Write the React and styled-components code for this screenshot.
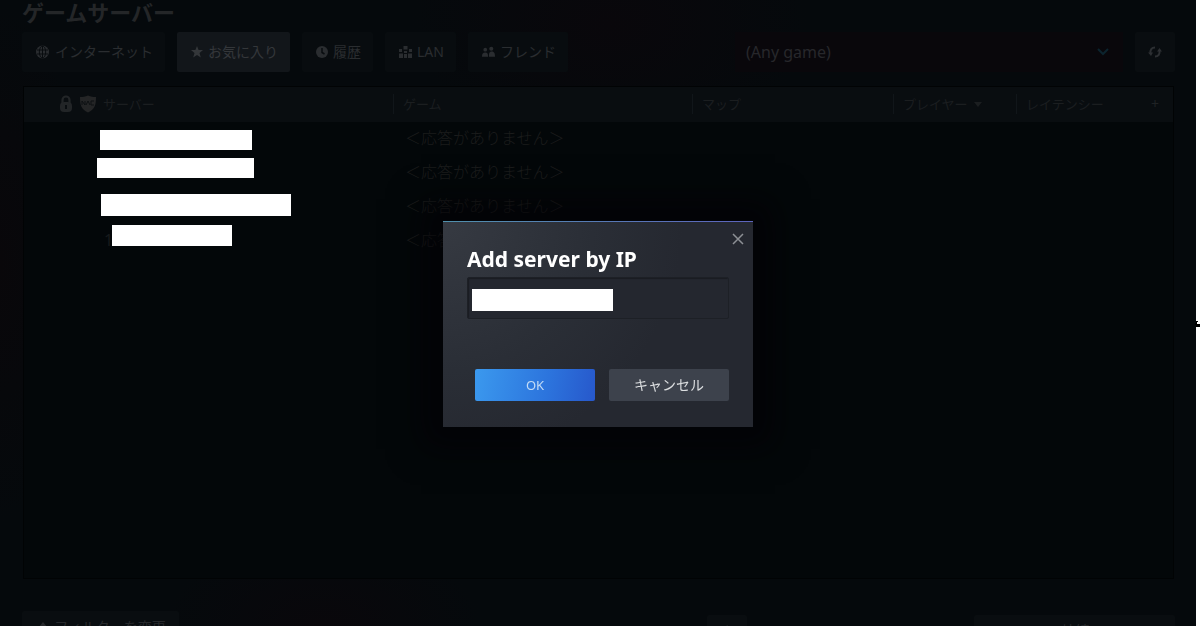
import React from "react";
import styled, { createGlobalStyle } from "styled-components";

const Global = createGlobalStyle`
  * { box-sizing: border-box; }
  html, body { margin: 0; background: #fff; }
  body, button, input, select {
    font-family: "Noto Sans", "Noto Sans CJK JP", sans-serif;
  }
`;

const Page = styled.div`
  position: relative;
  height: 100vh;
  margin-right: 4px;
  padding: 0 21px 0 22px;
  overflow: hidden;
  display: flex;
  flex-direction: column;
  background:
    radial-gradient(ellipse 200px 130px at 51% 4%, #09070b, transparent),
    radial-gradient(ellipse 90px 260px at 0% 42%, #09070a, transparent),
    radial-gradient(ellipse 160px 90px at 27% 100%, #09070b, transparent),
    #05090c;
`;

const Title = styled.h1`
  margin: 0 0 8px;
  font-size: 22px;
  line-height: 24px;
  font-weight: 700;
  color: #242628;
`;

const Toolbar = styled.div`
  display: flex;
  justify-content: space-between;
  height: 40px;
  margin-bottom: 14px;
`;

const Group = styled.div`
  display: flex;
  gap: ${(p) => p.$gap || 12}px;
`;

const Tab = styled.button`
  display: flex;
  align-items: center;
  gap: 5px;
  height: 40px;
  padding: 0 12px 0 14px;
  border: 0;
  border-radius: 2px;
  font-size: 14px;
  line-height: 20px;
  white-space: nowrap;
  color: ${(p) => (p.$active ? "#34373a" : "#2a2d30")};
  background: ${(p) => (p.$active ? "#12161a" : "#080c0f")};
`;

const SelectWrap = styled.div`
  display: grid;
  align-items: center;
  width: 388px;
  background: #09070b;
  > * { grid-area: 1 / 1; }
  > svg { justify-self: end; margin-right: 14px; pointer-events: none; }
`;

const GameSelect = styled.select`
  appearance: none;
  width: 100%;
  height: 40px;
  padding: 0 11px;
  border: 0;
  background: transparent;
  color: #27272b;
  font-size: 16px;
`;

const IconButton = styled.button`
  display: grid;
  place-items: center;
  width: 40px;
  height: 40px;
  padding: 0;
  border: 0;
  border-radius: 2px;
  color: #2c2f32;
  background: #090d10;
`;

const TablePanel = styled.div`
  flex: none;
  height: 493px;
  margin: 0 1px;
  border: 1px solid #010304;
  background: #030709;
`;

const Servers = styled.table`
  width: 100%;
  table-layout: fixed;
  border-collapse: collapse;
  th, td { padding: 0; text-align: left; font-weight: 400; }
  thead { background: #090d10; }
`;

const HeadCell = styled.div`
  display: flex;
  align-items: center;
  gap: 6px;
  height: 20px;
  margin: 7px 0 8px;
  padding: 0 ${(p) => (p.$last ? 14 : 0)}px 0 ${(p) => (p.$first ? 35 : 9)}px;
  border-left: ${(p) => (p.$first ? 0 : 1)}px solid #11161a;
  font-size: 13px;
  line-height: 20px;
  white-space: nowrap;
  color: #1b1e20;
  svg { flex: none; }
`;

const AddColumn = styled.button`
  margin-left: auto;
  padding: 0;
  border: 0;
  background: none;
  font-size: 14px;
  line-height: 20px;
  color: #1f2224;
`;

const NameCell = styled.div`
  position: relative;
  height: 34px;
  padding-left: 80px;
  font-size: 16px;
  line-height: 32px;
  color: #171a1c;
`;

const GameCell = styled.div`
  height: 34px;
  padding-left: 12px;
  font-size: 16px;
  font-weight: 300;
  line-height: 32px;
  white-space: nowrap;
  color: #1b1c1c;
`;

const Mask = styled.span`
  position: absolute;
  left: ${(p) => p.$x}px;
  top: ${(p) => p.$y}px;
  width: ${(p) => p.$w}px;
  height: ${(p) => p.$h}px;
  background: #fff;
`;

const Footer = styled.div`
  display: flex;
  justify-content: space-between;
  margin-top: 32px;
`;

const FooterButton = styled(Tab)`
  height: 32px;
  margin-top: ${(p) => p.$drop || 0}px;
  width: ${(p) => p.$w}px;
  justify-content: center;
  color: #26282b;
  background: #090d10;
`;

const Overlay = styled.div`
  position: fixed;
  inset: 0 4px 0 0;
  display: grid;
  place-items: center;
  padding-top: 22px;
`;

const Dialog = styled.form`
  display: flex;
  flex-direction: column;
  width: 310px;
  height: 206px;
  padding: 24px;
  background:
    linear-gradient(90deg, #5090ac, #5d64bd) top / 100% 1px no-repeat,
    radial-gradient(circle at 0 0, #363a42 0, #2a2e36 150px, #252830 240px);
  box-shadow: 0 0 30px 22px rgba(4, 2, 5, 0.6);
`;

const DialogTitle = styled.label`
  font-size: 21px;
  line-height: 28px;
  font-weight: 700;
  color: #fff;
`;

const Field = styled.div`
  position: relative;
  margin-top: 4px;
`;

const AddressInput = styled.input`
  display: block;
  width: 100%;
  height: 42px;
  padding: 0 8px;
  border: 1px solid #1d2026;
  border-radius: 2px;
  box-shadow: inset 1px 1px 1px #1a1c22;
  background: #24272f;
  color: #fff;
  font-size: 16px;
  outline: 0;
`;

const Actions = styled.div`
  display: flex;
  justify-content: flex-end;
  gap: 14px;
  margin-top: 50px;
`;

const Action = styled.button`
  width: 120px;
  height: 32px;
  padding: 0;
  border: 0;
  border-radius: 2px;
  font-size: ${(p) => (p.$primary ? 13 : 14)}px;
  line-height: 20px;
  color: ${(p) => (p.$primary ? "#c3dcf6" : "#dcdee0")};
  background: ${(p) => (p.$primary ? "linear-gradient(100deg, #3b99ee, #2c74dd 60%, #2758cb)" : "#3d424c")};
`;

const Close = styled.button`
  position: absolute;
  right: 9px;
  top: 12px;
  display: grid;
  padding: 0;
  border: 0;
  background: none;
  color: #8d9095;
`;

const DialogFrame = styled.div`
  position: relative;
`;

const Cursor = styled.svg`
  position: fixed;
  right: 0;
  top: 320px;
`;

const Globe = () => (
  <svg width="14" height="14" viewBox="0 0 14 14">
    <circle cx="6.5" cy="7" r="6.500" fill="currentColor" />
    <g fill="none" stroke="#080c0f">
      <path d="M6.5 1v12M1 5h11M1 9h11" />
      <ellipse cx="6.5" cy="7" rx="3.2" ry="6" />
    </g>
  </svg>
);
const Star = () => (
  <svg width="12" height="12" viewBox="0 0 12 12">
    <path fill="currentColor" d="M6 0l1.6 4H12L8.5 6.900l1.300 4.600L6 9l-3.800 2.500 1.300-4.600L0 4h4.400z" />
  </svg>
);
const Clock = () => (
  <svg width="12" height="12" viewBox="0 0 12 12">
    <circle cx="6" cy="6" r="6" fill="currentColor" />
    <path d="M6 2v4.500L8.500 8" fill="none" stroke="#080c0f" strokeWidth="1.500" />
  </svg>
);
const Lan = () => (
  <svg width="13" height="12" viewBox="0 0 13 12" fill="currentColor">
    <path d="M4.500 0h4v3.500h-4zM0 7.500h4V12H0zM9 7.500h4V12H9zM5 5h3v2H5zM5 8h3v4H5zM0 3h3v3H0zM10 3h3v3h-3z" />
  </svg>
);
const Friends = () => (
  <svg width="13" height="12" viewBox="0 0 14 12" fill="currentColor">
    <circle cx="3.500" cy="3.500" r="2" />
    <circle cx="10" cy="2.500" r="2.200" />
    <path d="M0 11c0-3 1-4.500 3.500-4.500S6.500 8 6.500 11zM7.500 11c0-3 0-5.500 3-5.500s3.500 2.500 3.500 5.500z" />
  </svg>
);
const Refresh = () => (
  <svg width="14" height="12" viewBox="0 0 14 12">
    <path d="M7 1.500C3.500 1.500 2 4 2.500 7.500M7 10.500c3.500 0 5-2.500 4.500-6" fill="none" stroke="currentColor" strokeWidth="2" />
    <path d="M0 6.500h5L3 10zM9 5.500h5L11.500 2z" fill="currentColor" />
  </svg>
);
const Lock = () => (
  <svg width="14" height="18" viewBox="0 0 14 18">
    <path d="M3.500 8V5a3.500 3.500 0 0 1 7 0v3" fill="none" stroke="#222527" strokeWidth="2.200" />
    <rect x="1" y="7" width="12" height="10" rx="4" fill="#222527" />
    <path d="M7 10v4" stroke="#090d10" strokeWidth="2" />
  </svg>
);
const Shield = () => (
  <svg width="18" height="18" viewBox="0 0 18 18">
    <path d="M1 2c3 0 5 0 8-1.500C12 2 14 2 17 2c0 8-1 12-8 15.500C2 14 1 10 1 2z" fill="#242526" />
    <path d="M3 10V6l3 4V6M7 10l2-4 2 4M15 6h-3v4h3" fill="none" stroke="#0d1012" />
  </svg>
);
const UpArrow = () => (
  <svg width="12" height="12" viewBox="0 0 12 12">
    <path d="M6 1l5 6H8v4H4V7H1z" fill="currentColor" />
  </svg>
);

const tabs = [
  { label: "インターネット", Icon: Globe },
  { label: "お気に入り", Icon: Star, active: true },
  { label: "履歴", Icon: Clock },
  { label: "LAN", Icon: Lan },
  { label: "フレンド", Icon: Friends },
];

const rows = [
  { x: 76, y: 8, w: 152, h: 20 },
  { x: 73, y: 2, w: 157, h: 20 },
  { x: 77, y: 4, w: 190, h: 22 },
  { x: 88, y: 1, w: 120, h: 21, text: "1" },
];

export default function App() {
  return (
    <>
      <Global />
      <Page>
        <Title>ゲームサーバー</Title>
        <Toolbar>
          <Group>
            {tabs.map(({ label, Icon, active }) => (
              <Tab key={label} $active={active}>
                <Icon />
                {label}
              </Tab>
            ))}
          </Group>
          <Group>
            <SelectWrap>
              <GameSelect aria-label="ゲーム">
                <option>(Any game)</option>
              </GameSelect>
              <svg width="12" height="8" viewBox="0 0 12 8">
                <path d="M1 1l5 5 5-5" fill="none" stroke="#0c242e" strokeWidth="2" />
              </svg>
            </SelectWrap>
            <IconButton aria-label="更新">
              <Refresh />
            </IconButton>
          </Group>
        </Toolbar>

        <TablePanel>
          <Servers>
            <colgroup>
              <col style={{ width: 369 }} />
              <col style={{ width: 299 }} />
              <col style={{ width: 201 }} />
              <col style={{ width: 123 }} />
              <col />
            </colgroup>
            <thead>
              <tr>
                <th><HeadCell $first><Lock /><Shield />サーバー</HeadCell></th>
                <th><HeadCell>ゲーム</HeadCell></th>
                <th><HeadCell>マップ</HeadCell></th>
                <th>
                  <HeadCell>
                    プレイヤー
                    <svg width="8" height="5" viewBox="0 0 8 5"><path d="M0 0h8L4 5z" fill="currentColor" /></svg>
                  </HeadCell>
                </th>
                <th>
                  <HeadCell $last>
                    レイテンシー
                    <AddColumn>+</AddColumn>
                  </HeadCell>
                </th>
              </tr>
            </thead>
            <tbody>
              {rows.map((r) => (
                <tr key={r.y}>
                  <td>
                    <NameCell>
                      {r.text}
                      <Mask $x={r.x} $y={r.y} $w={r.w} $h={r.h} />
                    </NameCell>
                  </td>
                  <td><GameCell>＜応答がありません＞</GameCell></td>
                  <td /><td /><td />
                </tr>
              ))}
            </tbody>
          </Servers>
        </TablePanel>

        <Footer>
          <FooterButton $w={157}><UpArrow />フィルターを変更</FooterButton>
          <Group $gap={227}>
            <FooterButton $w={40} $drop={4} aria-label="更新"><Refresh /></FooterButton>
            <FooterButton $w={201} $drop={4}>接続</FooterButton>
          </Group>
        </Footer>
      </Page>

      <Overlay>
        <DialogFrame>
          <Dialog onSubmit={(e) => e.preventDefault()}>
            <DialogTitle htmlFor="address">Add server by IP</DialogTitle>
            <Field>
              <AddressInput id="address" type="text" />
              <Mask $x={5} $y={12} $w={141} $h={22} />
            </Field>
            <Actions>
              <Action $primary type="submit">OK</Action>
              <Action type="button">キャンセル</Action>
            </Actions>
          </Dialog>
          <Close aria-label="閉じる">
            <svg width="12" height="12" viewBox="0 0 12 12">
              <path d="M1 1l10 10M11 1L1 11" stroke="currentColor" strokeWidth="1.500" />
            </svg>
          </Close>
        </DialogFrame>
      </Overlay>
      <Cursor width="5" height="8" viewBox="0 0 5 8">
        <path d="M1 1h2v3h2v3H1V5H0V3h1z" fill="#000" />
        <path d="M2 2h1v2H2z" fill="#fff" />
      </Cursor>
    </>
  );
}
